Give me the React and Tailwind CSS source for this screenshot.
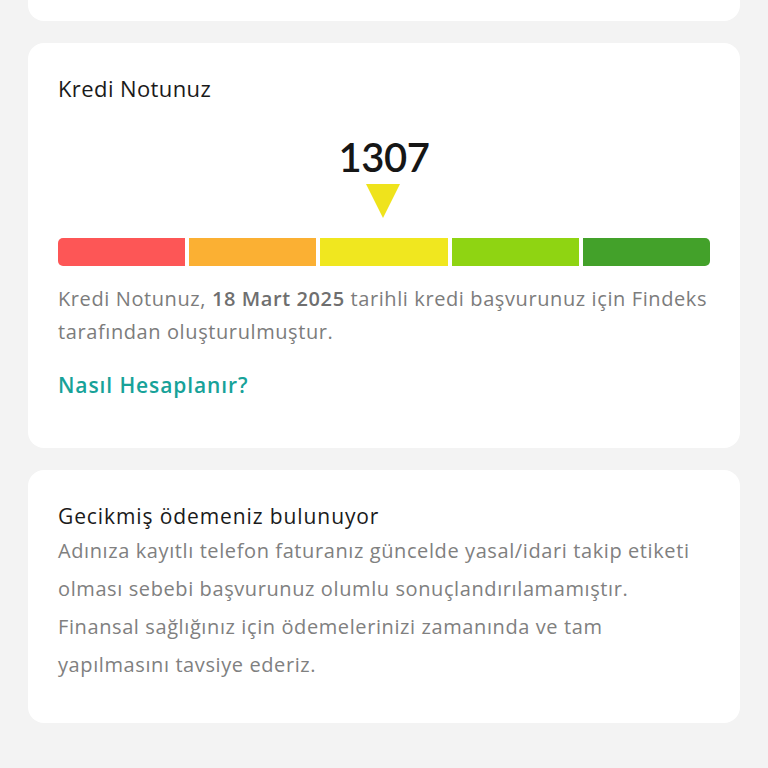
import React from "react";

const segments = [
  "bg-[#fd5656] rounded-l-[5px]",
  "bg-[#fbb033]",
  "bg-[#f0e71f]",
  "bg-[#8fd412]",
  "bg-[#43a12a] rounded-r-[5px]",
];

const ScoreCard = () => (
  <div className="bg-white rounded-2xl px-[30px] pt-[31px] pb-[48px]">
    <h2 className="text-[22px] leading-[28px] tracking-[0.4px] text-[#1a1a1a]">Kredi Notunuz</h2>

    <div className="flex flex-col items-center mt-[31px]">
      <div className="font-['Lato',sans-serif] text-[40px] leading-[48px] font-semibold text-[#161616] tracking-[-0.5px]">1307</div>
      <svg width="34" height="34" viewBox="0 0 34 34" className="mt-[3px] -translate-x-[1px]">
        <polygon points="0,0 34,0 17,34" fill="#efe31c" />
      </svg>
    </div>

    <div className="flex gap-[4px] h-[28px] mt-[20px]">
      {segments.map((cls, i) => (
        <div key={i} className={`flex-1 ${cls}`} />
      ))}
    </div>

    <p className="mt-[16px] text-[20px] leading-[33px] tracking-[0.6px] text-[#7c7c7c] whitespace-nowrap">
      Kredi Notunuz, <span className="font-semibold text-[#6f6f6f]">18 Mart 2025</span> tarihli kredi başvurunuz için Findeks
      <br />
      tarafından oluşturulmuştur.
    </p>

    <a className="block mt-[22px] text-[21px] leading-[30px] tracking-[0.9px] font-semibold text-[#17a299]">Nasıl Hesaplanır?</a>
  </div>
);

const WarningCard = () => (
  <div className="bg-white rounded-2xl px-[30px] pt-[32px] pb-[39px]">
    <h3 className="text-[21px] leading-[28px] tracking-[0.9px] text-[#1a1a1a]">Gecikmiş ödemeniz bulunuyor</h3>
    <p className="mt-[2px] text-[20px] leading-[38px] tracking-[0.6px] text-[#808080] whitespace-nowrap">
      Adınıza kayıtlı telefon faturanız güncelde yasal/idari takip etiketi
      <br />
      olması sebebi başvurunuz olumlu sonuçlandırılamamıştır.
      <br />
      Finansal sağlığınız için ödemelerinizi zamanında ve tam
      <br />
      yapılmasını tavsiye ederiz.
    </p>
  </div>
);

export default function App() {
  return (
    <div className="w-[768px] h-[768px] overflow-hidden bg-[#f3f3f3] font-['Open_Sans',sans-serif]">
      <div className="flex flex-col gap-[22px] px-[28px]">
        <div className="h-[21px] bg-white rounded-b-2xl" />
        <ScoreCard />
        <WarningCard />
      </div>
    </div>
  );
}
